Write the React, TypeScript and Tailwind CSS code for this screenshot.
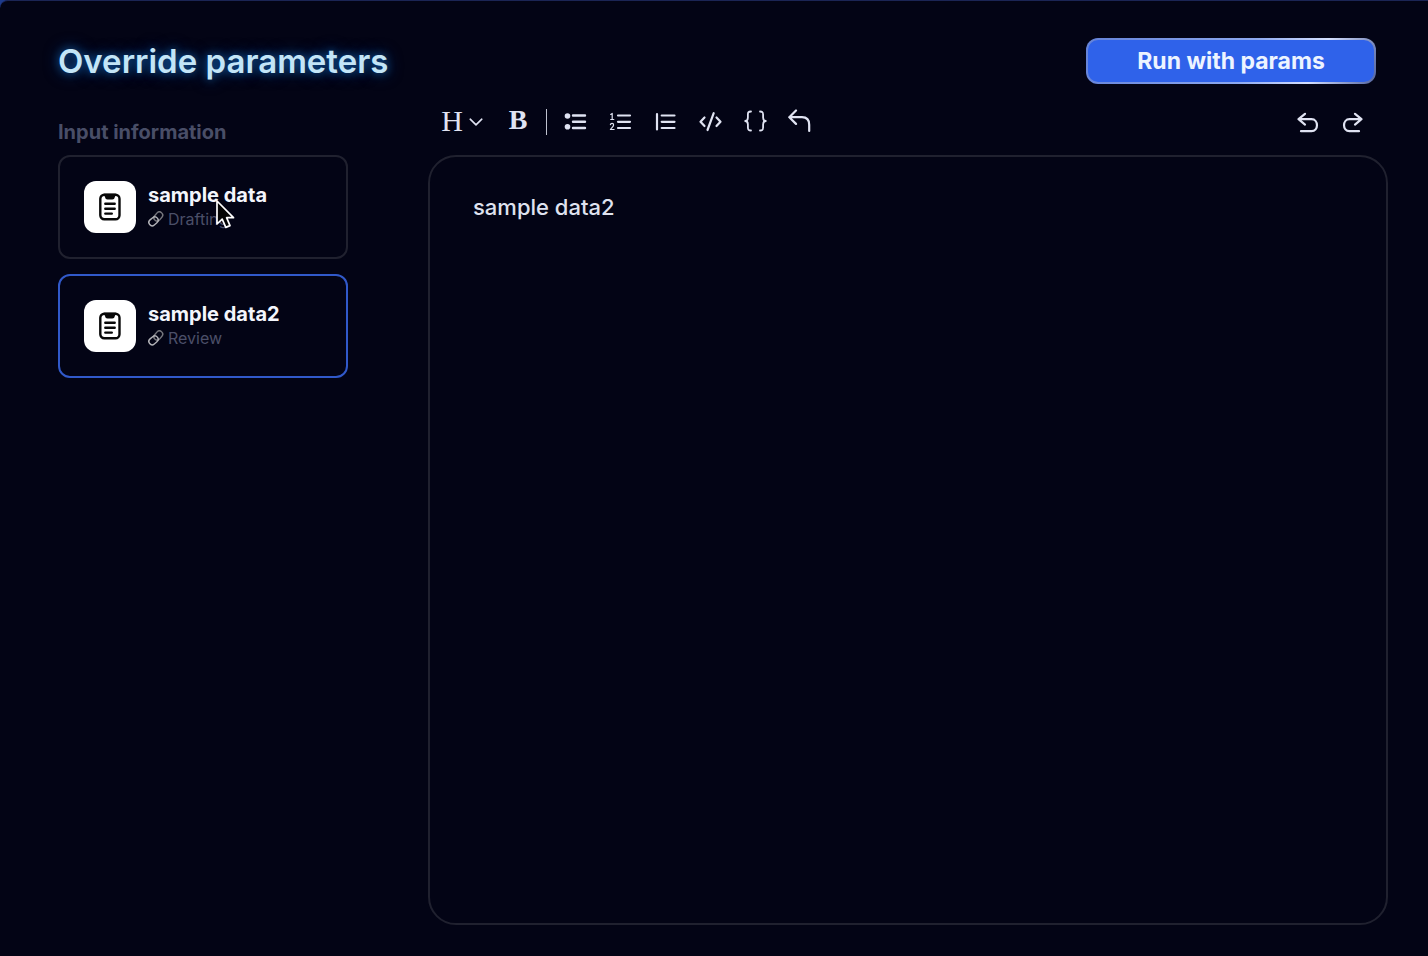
import { useState } from "react";
import type { ReactNode } from "react";

type Item = { id: string; title: string; status: string };

const items: Item[] = [
  { id: "a", title: "sample data", status: "Drafting" },
  { id: "b", title: "sample data2", status: "Review" },
];

function ClipboardIcon() {
  return (
    <svg width="22" height="28" viewBox="0 0 22 28" fill="none" stroke="#090909" strokeWidth="2.400" strokeLinecap="round" aria-hidden="true">
      <rect x="1.300" y="1.800" width="19.200" height="24.400" rx="4" />
      <path d="M4.500 0.700H17.300L15.300 5.200Q14.600 6.600 13.200 6.600H8.600Q7.200 6.600 6.500 5.200Z" fill="#090909" stroke="none" />
      <path d="M6.300 10.800H15.700M6.300 15.700H15.700M6.300 20.600H12.800" />
    </svg>
  );
}

function LinkIcon() {
  return (
    <svg width="16" height="16" viewBox="0 0 16 16" fill="none" strokeLinecap="round" aria-hidden="true">
      <rect x="-5" y="-3.300" width="10" height="6.600" rx="3.300" transform="translate(10.300 5.500) rotate(-50)" stroke="#77777d" strokeWidth="1.400" />
      <rect x="-5" y="-3.300" width="10" height="6.600" rx="3.300" transform="translate(5.500 10.300) rotate(-40)" stroke="#b4b4b9" strokeWidth="1.400" />
    </svg>
  );
}

function Pointer() {
  return (
    <svg className="pointer-events-none absolute top-[44px] left-[157px]" width="22" height="32" viewBox="0 0 22 32" aria-hidden="true">
      <path d="M2 2V25L7.200 20.200L10.800 28.400L15 26.600L11.600 18.700H18.500Z" fill="#050505" stroke="#fff" strokeWidth="1.700" strokeLinejoin="round" />
    </svg>
  );
}

function Tool({ label, className, children }: { label: string; className: string; children: ReactNode }) {
  return (
    <button type="button" aria-label={label} className={`flex h-8 shrink-0 items-center justify-center ${className}`}>
      {children}
    </button>
  );
}

function Glyph({ children }: { children: ReactNode }) {
  return (
    <svg width="26" height="26" viewBox="0 0 26 26" fill="none" stroke="currentColor" strokeWidth="2.200" strokeLinecap="round" strokeLinejoin="round" aria-hidden="true">
      {children}
    </svg>
  );
}

export default function App() {
  const [selected, setSelected] = useState("b");
  const [text, setText] = useState("sample data2");

  return (
    <div className="min-h-screen bg-[#1d3a8c] font-['Inter',sans-serif]">
      <div className="flex min-h-screen flex-col rounded-tl-lg border-t border-[#1b2555] bg-[#030415] pt-[37px] pr-10 pb-[31px] pl-[58px]">
        <header className="flex items-center justify-between pr-3">
          <h1 className="text-[33px] leading-[46px] font-semibold text-[#c3e5f7] [text-shadow:0_0_8px_#10539a,0_0_16px_#0c3f7c]">
            Override parameters
          </h1>
          <button
            type="button"
            className="h-[46px] w-[290px] rounded-xl border-2 border-transparent text-[23px] font-bold text-[#edf4ff] [background:linear-gradient(#2f62ea,#2f62ea)_padding-box,linear-gradient(115deg,#6482d8,#8da9f0_55%,#d5e0ff_78%,#53649f)_border-box]"
          >
            Run with params
          </button>
        </header>

        <div className="flex flex-1 gap-20">
          <aside className="w-[290px] shrink-0">
            <h2 className="pt-[34px] pb-[9px] text-[20px] leading-7 font-bold text-[#494e67]">Input information</h2>
            <ul className="flex flex-col gap-[15px]">
              {items.map((item) => (
                <li key={item.id} className="relative">
                  <button
                    type="button"
                    aria-pressed={selected === item.id}
                    onClick={() => setSelected(item.id)}
                    className={`flex w-full items-center gap-3 rounded-xl border-2 p-6 text-left ${
                      selected === item.id ? "border-[#3159c9]" : "border-[#20212f]"
                    }`}
                  >
                    <span className="flex size-[52px] shrink-0 items-center justify-center rounded-xl bg-white">
                      <ClipboardIcon />
                    </span>
                    <span className="flex flex-col">
                      <span className="text-[20px] leading-6 font-bold text-[#f4f6fc]">{item.title}</span>
                      <span className="flex items-center gap-1 text-[16px] leading-6 text-[#4b4f68]">
                        <LinkIcon />
                        {item.status}
                      </span>
                    </span>
                  </button>
                  {item.id === "a" && <Pointer />}
                </li>
              ))}
            </ul>
          </aside>

          <main className="flex min-w-0 flex-1 flex-col">
            <div role="toolbar" aria-label="Formatting" className="flex items-center justify-between pt-[22px] pr-[22px] pb-[17px] pl-3 text-[#e0e3f2]">
              <div className="flex items-center">
                <Tool label="Heading" className="w-11 gap-1.5 pb-1 font-['Liberation_Serif',serif] text-[30px]">
                  <span>H</span>
                  <svg className="mt-1" width="14" height="8" viewBox="0 0 14 8" fill="none" stroke="currentColor" strokeWidth="1.600" strokeLinecap="round" strokeLinejoin="round" aria-hidden="true">
                    <path d="m1.200 1.200 5.800 5.600 5.800-5.600" />
                  </svg>
                </Tool>
                <Tool label="Bold" className="ml-6 w-5 pb-1 font-['Liberation_Serif',serif] text-[28px] font-bold">
                  B
                </Tool>
                <span className="mr-4 ml-[18px] h-[26px] w-px bg-[#bfc2cf]" />
                <div className="flex items-center gap-[19px]">
                  <Tool label="Bulleted list" className="w-[26px]">
                    <Glyph>
                      <path d="M10 6.500H22M10 12.800H22M10 19H22" strokeWidth="2.400" />
                      <circle cx="4.500" cy="7" r="2.800" fill="currentColor" stroke="none" />
                      <circle cx="4.500" cy="17.700" r="2.800" fill="currentColor" stroke="none" />
                    </Glyph>
                  </Tool>
                  <Tool label="Numbered list" className="w-[26px]">
                    <Glyph>
                      <path d="M10 6.500H22M10 12.800H22M10 19H22" />
                      <path d="M2.700 5.400 4.200 4.400V10.400M2.700 10.500H5.800M2.400 15.600C2.800 13.800 5.600 13.800 5.600 15.900C5.600 17.400 4 18.500 2.400 20.500H6.100" strokeWidth="1.200" />
                    </Glyph>
                  </Tool>
                  <Tool label="Quote" className="w-[26px]">
                    <Glyph>
                      <path d="M4 5.200V20.500M8.700 6.500H21.500M8.700 12.800H21.500M8.700 19H21.500" />
                    </Glyph>
                  </Tool>
                  <Tool label="Inline code" className="w-[26px]">
                    <Glyph>
                      <path d="m6.500 8.500-4 4.200L6.500 17M18.500 8.500l4 4.200L18.500 17M15.700 4.200 9.500 21" />
                    </Glyph>
                  </Tool>
                  <Tool label="Code block" className="w-[26px]">
                    <Glyph>
                      <path d="M8 2.500C5 2.500 4.900 3.800 4.900 5.500V8.500C4.900 10.800 4.100 12 2.200 12C4.100 12 4.900 13.200 4.900 15.500V18.500C4.900 20.200 5 21.500 8 21.500M17 2.500C20 2.500 20.100 3.800 20.100 5.500V8.500C20.100 10.800 20.900 12 22.800 12C20.900 12 20.100 13.200 20.100 15.500V18.500C20.100 20.200 20 21.500 17 21.500" strokeWidth="1.800" />
                    </Glyph>
                  </Tool>
                  <Tool label="Hard break" className="w-[26px]">
                    <Glyph>
                      <path d="M8 1.500 1.300 8.200 8 14.900M1.300 8.200H14Q21.200 8.200 21.200 15.800V22" />
                    </Glyph>
                  </Tool>
                </div>
              </div>
              <div className="flex items-center gap-[19px]">
                <Tool label="Undo" className="w-[26px]">
                  <Glyph>
                    <path d="M10 4.800 3.500 10.200 10 15.600M3.500 10.200H16.500C23.800 10.200 23.800 22.200 16.500 22.200H6" />
                  </Glyph>
                </Tool>
                <Tool label="Redo" className="w-[26px]">
                  <Glyph>
                    <path d="M15 4.800 21.500 10.200 15 15.600M21.500 10.200H9.500C2.200 10.200 2.200 22.200 9.500 22.200H19" />
                  </Glyph>
                </Tool>
              </div>
            </div>
            <textarea
              aria-label="Sample content"
              spellCheck={false}
              value={text}
              onChange={(event) => setText(event.target.value)}
              className="w-full flex-1 resize-none rounded-[28px] border-2 border-[#20212f] bg-transparent px-[43px] py-[34px] text-[22px] leading-8 font-medium text-[#dfe2ef] outline-none"
            />
          </main>
        </div>
      </div>
    </div>
  );
}
